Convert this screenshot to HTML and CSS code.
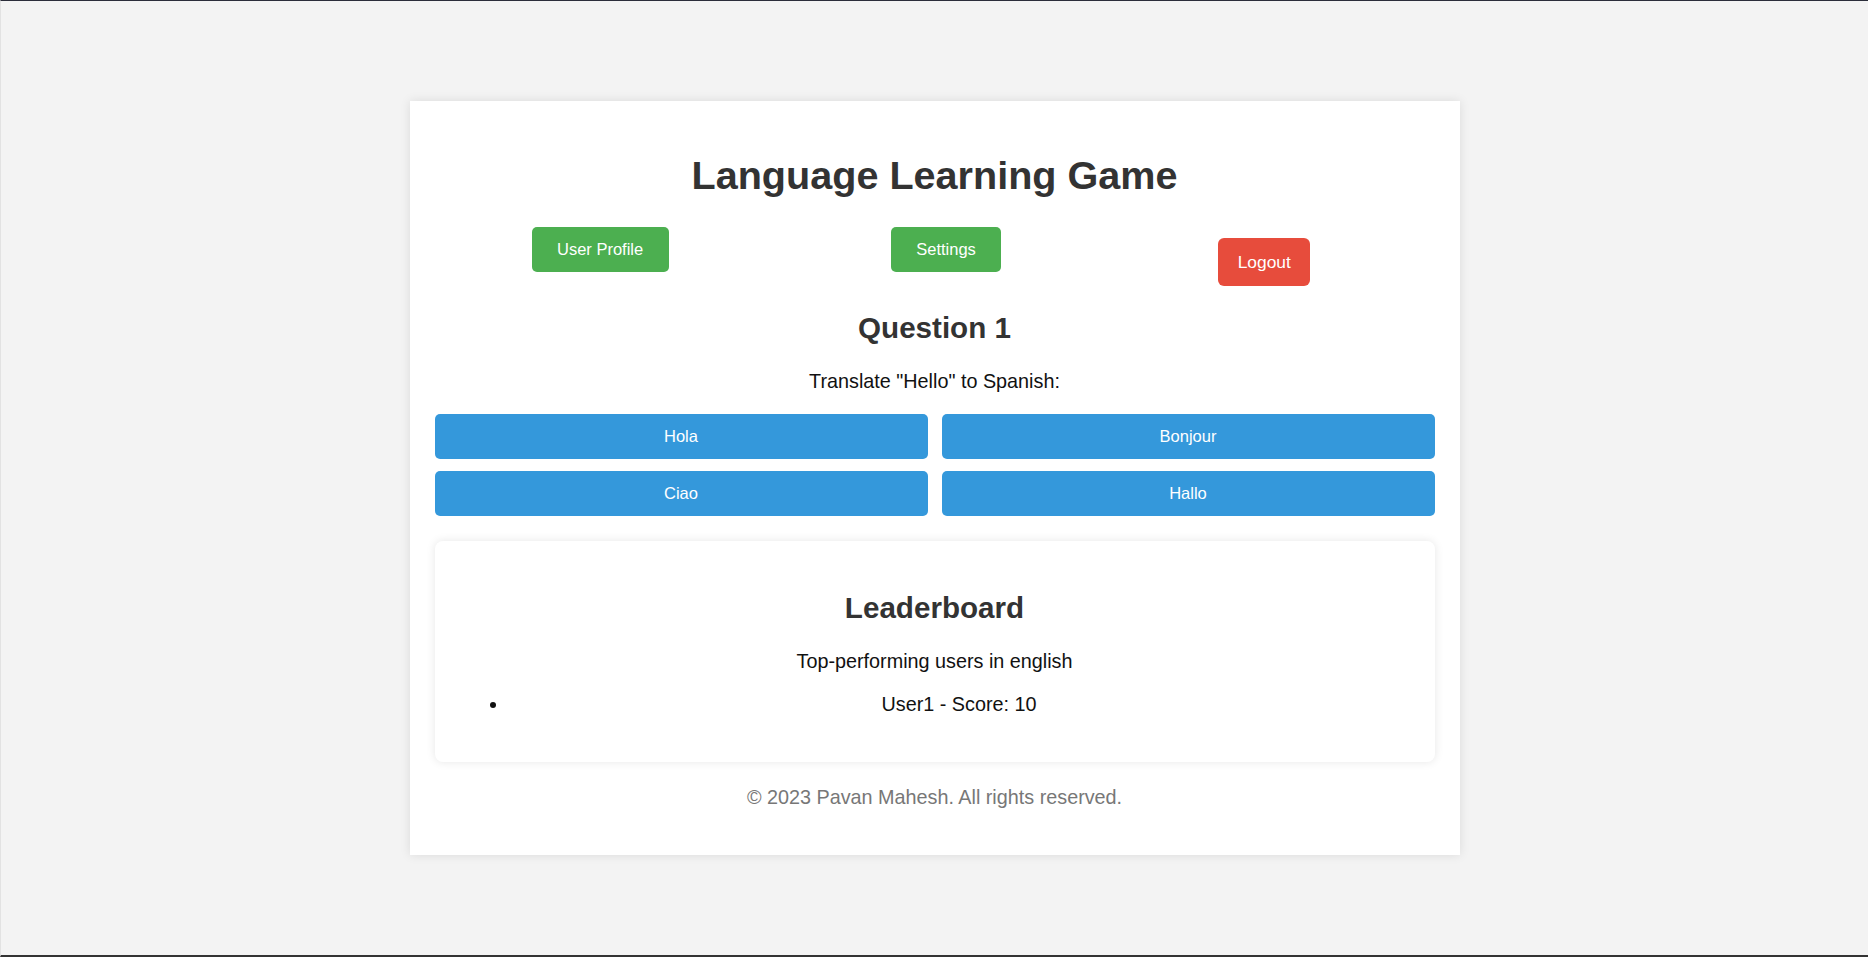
FILE: index.html
```html
<!DOCTYPE html>
<html lang="en">
<head>
<meta charset="utf-8">
<title>Language Learning Game</title>
<link rel="stylesheet" href="styles.css">
</head>
<body>
  <main class="card">
    <h1 class="title">Language Learning Game</h1>
    <nav class="nav">
      <a class="nav-btn nav-profile" href="#">User Profile</a>
      <a class="nav-btn nav-settings" href="#">Settings</a>
      <form class="logout-form">
        <button class="logout-btn" type="button">Logout</button>
      </form>
    </nav>
    <section class="question">
      <h2 class="heading">Question 1</h2>
      <p class="text">Translate "Hello" to Spanish:</p>
      <div class="answers">
        <button class="answer" type="button">Hola</button>
        <button class="answer" type="button">Bonjour</button>
        <button class="answer" type="button">Ciao</button>
        <button class="answer" type="button">Hallo</button>
      </div>
    </section>
    <section class="leaderboard">
      <h2 class="heading">Leaderboard</h2>
      <p class="text">Top-performing users in english</p>
      <ul class="board-list">
        <li class="board-item">User1 - Score: 10</li>
      </ul>
    </section>
    <footer class="footer">
      <p class="footer-text">© 2023 Pavan Mahesh. All rights reserved.</p>
    </footer>
  </main>
</body>
</html>
```

FILE: styles.css
```css
html, body {
  margin: 0;
  padding: 0;
}

body {
  box-sizing: border-box;
  min-height: 100vh;
  background: #f3f3f3;
  font-family: "Liberation Sans", Arial, sans-serif;
  display: flex;
  align-items: center;
  justify-content: center;
  border-top: 1px solid #2b2d3a;
  border-bottom: 2px solid #333333;
  border-left: 1px solid #e2e2e2;
}

.card {
  width: 1000px;
  padding: 25px 25px 26px;
  background: #ffffff;
  box-shadow: 0 0 10px rgba(0, 0, 0, 0.1);
  text-align: center;
}

.title {
  margin: 26.5px 0 29.3px;
  font-size: 39.6px;
  font-weight: bold;
  color: #333333;
}

.nav {
  display: flex;
  align-items: flex-start;
  padding-left: 97px;
}

.nav-btn {
  display: block;
  padding: 12.7px 25.5px;
  background: #4caf50;
  color: #ffffff;
  font-size: 16.5px;
  text-decoration: none;
  border-radius: 5px;
}

.nav-settings {
  margin-left: 222px;
}

.logout-form {
  margin: 11px 0 0 217px;
}

.logout-btn {
  display: block;
  margin: 0;
  padding: 13.6px 19.3px;
  border: none;
  border-radius: 6px;
  background: #e74c3c;
  color: #ffffff;
  font-family: "Liberation Sans", Arial, sans-serif;
  font-size: 17.4px;
  line-height: normal;
}

.heading {
  margin: 24.6px 0;
  font-size: 29.6px;
  font-weight: bold;
  color: #333333;
}

.text {
  margin: 19.8px 0;
  font-size: 19.8px;
  color: #111111;
}

.answers {
  display: grid;
  grid-template-columns: 1fr 1fr;
  gap: 12.3px 14px;
  margin-top: 21.3px;
}

.answer {
  margin: 0;
  padding: 12.9px 10px;
  border: none;
  border-radius: 5px;
  background: #3498db;
  color: #ffffff;
  font-family: "Liberation Sans", Arial, sans-serif;
  font-size: 16.5px;
  line-height: normal;
}

.leaderboard {
  margin-top: 25px;
  padding: 26px 25px;
  background: #ffffff;
  border-radius: 8px;
  box-shadow: 0 0 10px rgba(0, 0, 0, 0.1);
}

.board-list {
  margin: 19.8px 0;
  padding-left: 49px;
  font-size: 19.8px;
  color: #111111;
}

.footer-text {
  margin: 24.2px 0 19.8px;
  font-size: 19.8px;
  color: #777777;
}
```
